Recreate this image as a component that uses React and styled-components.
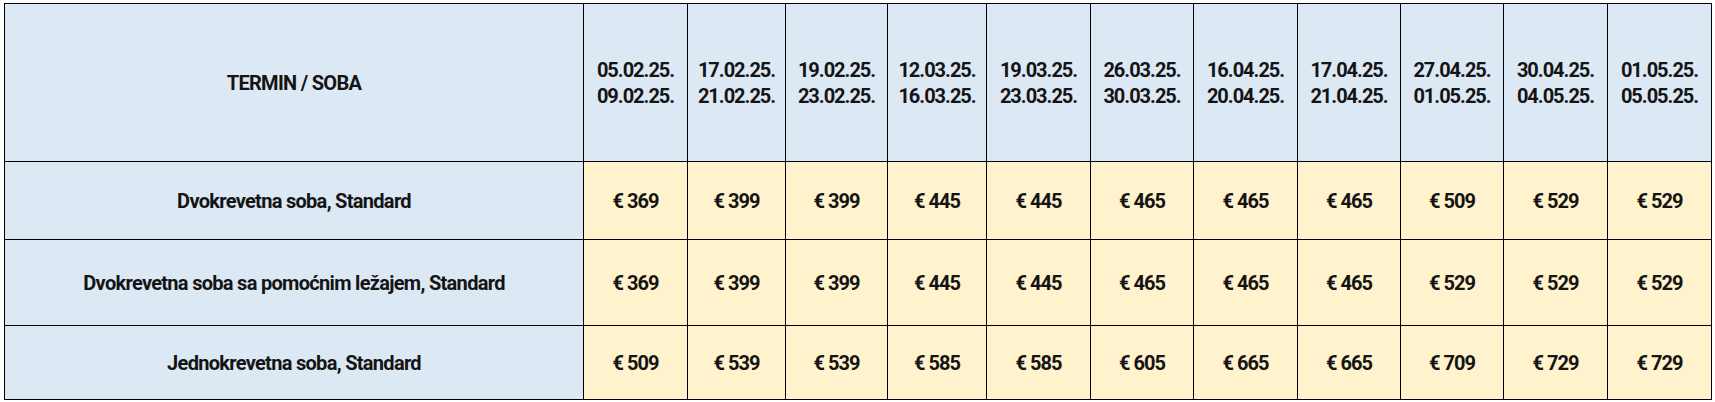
import React from "react";
import styled, { createGlobalStyle } from "styled-components";

const GlobalStyle = createGlobalStyle`
  body {
    margin: 0;
    background: #fff;
    font-family: Roboto, "Liberation Sans", sans-serif;
  }
`;

const Page = styled.div`
  padding: 3px 4px;
`;

const Table = styled.table`
  border-collapse: collapse;
  table-layout: fixed;
  width: 1707px;
  color: #141414;
  font-weight: 700;
`;

const Cell = styled.td`
  border: 1px solid #000;
  text-align: center;
  vertical-align: middle;
  padding: 0;
  font-size: 20px;
  letter-spacing: ${(p) => (p.$label ? "-0.7px" : "-1px")};
  line-height: 26px;
  background: ${(p) => (p.$price ? "#fff2cc" : "#dde8f5")};
`;

const Row = styled.tr`
  height: ${(p) => p.$h}px;
`;

const widths = [579, 104, 98, 102, 99, 104, 103, 104, 103, 103, 104, 104];

const dates = [
  ["05.02.25.", "09.02.25."],
  ["17.02.25.", "21.02.25."],
  ["19.02.25.", "23.02.25."],
  ["12.03.25.", "16.03.25."],
  ["19.03.25.", "23.03.25."],
  ["26.03.25.", "30.03.25."],
  ["16.04.25.", "20.04.25."],
  ["17.04.25.", "21.04.25."],
  ["27.04.25.", "01.05.25."],
  ["30.04.25.", "04.05.25."],
  ["01.05.25.", "05.05.25."],
];

const rooms = [
  {
    name: "Dvokrevetna soba, Standard",
    h: 78,
    prices: [369, 399, 399, 445, 445, 465, 465, 465, 509, 529, 529],
  },
  {
    name: "Dvokrevetna soba sa pomoćnim ležajem, Standard",
    h: 86,
    prices: [369, 399, 399, 445, 445, 465, 465, 465, 529, 529, 529],
  },
  {
    name: "Jednokrevetna soba, Standard",
    h: 74,
    prices: [509, 539, 539, 585, 585, 605, 665, 665, 709, 729, 729],
  },
];

export default function App() {
  return (
    <Page>
      <GlobalStyle />
      <Table>
        <colgroup>
          {widths.map((w, i) => (
            <col key={i} style={{ width: w }} />
          ))}
        </colgroup>
        <tbody>
          <Row $h={158}>
            <Cell $label>TERMIN / SOBA</Cell>
            {dates.map(([from, to], i) => (
              <Cell key={i}>
                {from}
                <br />
                {to}
              </Cell>
            ))}
          </Row>
          {rooms.map((room) => (
            <Row key={room.name} $h={room.h}>
              <Cell $label>{room.name}</Cell>
              {room.prices.map((p, i) => (
                <Cell key={i} $price>
                  € {p}
                </Cell>
              ))}
            </Row>
          ))}
        </tbody>
      </Table>
    </Page>
  );
}
